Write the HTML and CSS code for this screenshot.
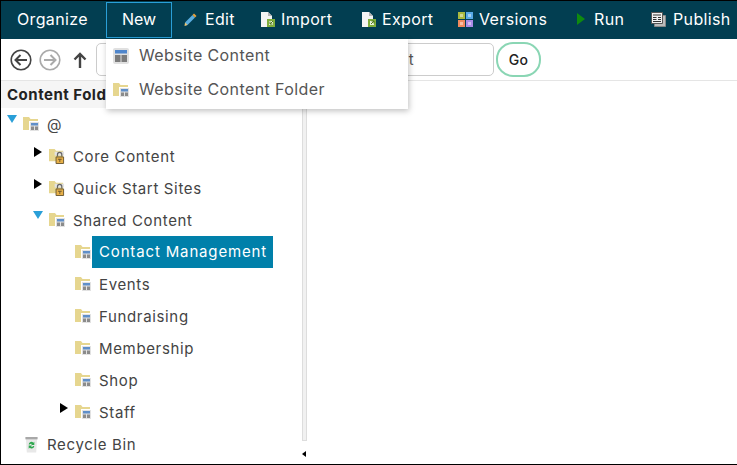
FILE: index.html
```html
<!DOCTYPE html>
<html lang="en">

  <head>
    <meta charset="UTF-8">
    <title>Content Manager</title>
    <link rel="stylesheet" href="styles.css">
  </head>

  <body>
    <svg class="defs" width="0" height="0">
      <symbol id="folder" viewBox="0 0 16 16">
        <path d="M0 1h6l1.500 2H15v11H0z" fill="#e6d68f"/>
        <path d="M6 5h10v10H6z" fill="#fff"/>
        <path d="M7 6h9v9H7z" fill="#e2e2e2"/>
        <path d="M8 7h7v2.500H8z" fill="#5f8fc9"/>
        <path d="M8 10.500h3V14H8zM12 10.500h3V14h-3z" fill="#8b8b8b"/>
      </symbol>
      <symbol id="locked" viewBox="0 0 17 17">
        <path d="M0 1h6l1.500 2H15v11H0z" fill="#e6d68f"/>
        <path d="M6 4h10v4H6z" fill="#e2e2e2"/>
        <path d="M9 9V7a2.300 2.300 0 0 1 4.600 0v2" fill="none" stroke="#666" stroke-width="1.300"/>
        <path d="M7.500 9.500h8v7h-8z" fill="#e7b048" stroke="#6b5730"/>
        <path d="M9.500 11.500h4v1h-1.500v2.500h-1v-2.500H9.500z" fill="#6b5730"/>
      </symbol>
    </svg>

    <div class="frame">
      <nav class="menubar">
        <a class="menu-item organize">Organize</a>
        <a class="menu-item active">New</a>
        <a class="menu-item edit">
          <svg class="icon" width="13" height="13" viewBox="0 0 13 13">
            <path d="M1 9.500 8.500 2l2.500 2.500L3.500 12 1 12.500z" fill="#5aaee0"/>
            <path d="M8.500 2 10 .5 12.500 3 11 4.500z" fill="#e9a23b"/>
            <path d="M1 9.500 3.500 12 .5 13z" fill="#f2c46a"/>
          </svg>
          Edit
        </a>
        <a class="menu-item import">
          <svg class="icon" width="14" height="15" viewBox="0 0 14 15">
            <path d="M0 0h7l4 4v11H0z" fill="#f4f4f4"/>
            <path d="M7 0v4h4z" fill="#b5b5b5"/>
            <path d="M6 7h8v8H6z" fill="#7fae3c"/>
            <path d="M8 9h4v4H8z" fill="#e8f2d8"/>
            <path d="M12 9 9 12M9 9.500V12h2.500" fill="none" stroke="#4f7a1c"/>
          </svg>
          Import
        </a>
        <a class="menu-item export">
          <svg class="icon" width="14" height="15" viewBox="0 0 14 15">
            <path d="M0 0h7l4 4v11H0z" fill="#f4f4f4"/>
            <path d="M7 0v4h4z" fill="#b5b5b5"/>
            <path d="M6 7h8v8H6z" fill="#7fae3c"/>
            <path d="M8 9h4v4H8z" fill="#e8f2d8"/>
            <path d="M9 12l3-3M9.500 9H12v2.500" fill="none" stroke="#4f7a1c"/>
          </svg>
          Export
        </a>
        <a class="menu-item versions">
          <svg class="icon" width="15" height="15" viewBox="0 0 15 15">
            <path d="M0 0h7v7H0z" fill="#a9b93f"/>
            <path d="M8 0h7v7H8z" fill="#58a9e6"/>
            <path d="M0 8h7v7H0z" fill="#f08a5d"/>
            <path d="M8 8h7v7H8z" fill="#a98be8"/>
            <path d="M2 2h3v3H2zM10 2h3v3h-3zM2 10h3v3H2zM10 10h3v3h-3z" fill="#fff" fill-opacity=".45"/>
          </svg>
          Versions
        </a>
        <a class="menu-item run">
          <svg class="icon" width="8" height="12" viewBox="0 0 8 12"><path d="M0 0l8 6-8 6z" fill="#0f8a0f"/></svg>
          Run
        </a>
        <a class="menu-item publish">
          <svg class="icon" width="15" height="15" viewBox="0 0 15 15">
            <path d="M3.500 3.500h11v11h-11z" fill="#bbb" stroke="#888"/>
            <path d="M.5.500h11v11H.5z" fill="#f2f2f2" stroke="#555"/>
            <path d="M2 3h8M2 5.500h3.500M7 5.500h3M2 7.500h3.500M7 7.500h3M2 9.500h8" stroke="#333"/>
          </svg>
          Publish
        </a>
      </nav>

      <div class="toolbar">
        <svg class="nav-btn" width="22" height="22" viewBox="0 0 22 22">
          <circle cx="11" cy="11" r="9.800" fill="none" stroke="#444" stroke-width="1.600"/>
          <path d="M17 11H6M10.500 6 5.500 11l5 5" fill="none" stroke="#444" stroke-width="2"/>
        </svg>
        <svg class="nav-btn" width="22" height="22" viewBox="0 0 22 22">
          <circle cx="11" cy="11" r="9.800" fill="none" stroke="#aaa" stroke-width="1.600"/>
          <path d="M5 11h11M11.500 6l5 5-5 5" fill="none" stroke="#aaa" stroke-width="2"/>
        </svg>
        <svg class="nav-btn up" width="14" height="16" viewBox="0 0 14 16">
          <path d="M7 16V2M1.500 7.500 7 2l5.500 5.500" fill="none" stroke="#444" stroke-width="2.400"/>
        </svg>
        <input class="path-input" type="text" value="@/Shared Content/Contact Management">
        <button class="go-btn">Go</button>
      </div>

      <div class="main">
        <aside class="sidebar">
          <div class="sidebar-title">Content Folders</div>
          <ul class="tree">
            <li class="row level-0">
              <span class="toggle open"></span>
              <svg class="folder"><use href="#folder"/></svg>
              <span class="label">@</span>
            </li>
            <li class="row level-1">
              <span class="toggle closed"></span>
              <svg class="folder"><use href="#locked"/></svg>
              <span class="label">Core Content</span>
            </li>
            <li class="row level-1">
              <span class="toggle closed"></span>
              <svg class="folder"><use href="#locked"/></svg>
              <span class="label">Quick Start Sites</span>
            </li>
            <li class="row level-1">
              <span class="toggle open"></span>
              <svg class="folder"><use href="#folder"/></svg>
              <span class="label">Shared Content</span>
            </li>
            <li class="row level-2">
              <span class="toggle"></span>
              <svg class="folder"><use href="#folder"/></svg>
              <span class="label selected">Contact Management</span>
            </li>
            <li class="row level-2">
              <span class="toggle"></span>
              <svg class="folder"><use href="#folder"/></svg>
              <span class="label">Events</span>
            </li>
            <li class="row level-2">
              <span class="toggle"></span>
              <svg class="folder"><use href="#folder"/></svg>
              <span class="label">Fundraising</span>
            </li>
            <li class="row level-2">
              <span class="toggle"></span>
              <svg class="folder"><use href="#folder"/></svg>
              <span class="label">Membership</span>
            </li>
            <li class="row level-2">
              <span class="toggle"></span>
              <svg class="folder"><use href="#folder"/></svg>
              <span class="label">Shop</span>
            </li>
            <li class="row level-2">
              <span class="toggle closed"></span>
              <svg class="folder"><use href="#folder"/></svg>
              <span class="label">Staff</span>
            </li>
            <li class="row level-0">
              <span class="toggle"></span>
              <svg class="folder bin" viewBox="0 0 16 18">
                <path d="M2 2.500h12L13 17.500H3z" fill="#e8e8e8"/>
                <path d="M1.500 1h13v2.500h-13z" fill="#a8a8a8"/>
                <path d="M5 9a3 3 0 0 1 5-2l1-1v3.500H7.500l1-1A2 2 0 0 0 6 9zM11 10.500a3 3 0 0 1-5 2l-1 1V10h3.500l-1 1A2 2 0 0 0 10 10.500z" fill="#2fa84f"/>
              </svg>
              <span class="label">Recycle Bin</span>
            </li>
          </ul>
        </aside>
        <div class="splitter"><span class="splitter-arrow"></span></div>
        <section class="content"></section>
      </div>

      <div class="dropdown">
        <div class="dropdown-item">
          <svg width="16" height="16" viewBox="0 0 16 16">
            <rect width="16" height="16" rx="2" fill="#e0e0e0"/>
            <path d="M2 2h12v3.500H2z" fill="#4f86cc"/>
            <path d="M2 7h5.500v7H2zM8.500 7H14v7H8.500z" fill="#7b7b7b"/>
          </svg>
          Website Content
        </div>
        <div class="dropdown-item">
          <svg width="16" height="16"><use href="#folder"/></svg>
          Website Content Folder
        </div>
      </div>
    </div>
  </body>

</html>
```

FILE: styles.css
```css
* {
  box-sizing: border-box;
}

body {
  margin: 0;
  font-family: Inter, "Open Sans", sans-serif;
  background-color: white;
}

.defs {
  position: absolute;
}

.frame {
  position: relative;
  display: flex;
  flex-direction: column;
  width: 737px;
  height: 465px;
  border: 1px solid black;
  border-right: none;
  overflow: hidden;
}

.menubar {
  display: flex;
  align-items: center;
  height: 38px;
  background-color: #023e51;
  padding-left: 1px;
}

.menu-item {
  display: flex;
  align-items: center;
  flex-shrink: 0;
  gap: 6px;
  height: 36px;
  color: white;
  font-size: 16px;
  letter-spacing: 0.35px;
  white-space: nowrap;
  padding-left: 12px;
  padding-bottom: 2px;
}

.organize {
  width: 104px;
  padding-left: 15px;
}

.active {
  width: 66px;
  justify-content: center;
  border: 1px solid #2a9fd8;
  padding: 0 0 2px;
  letter-spacing: 0;
}

.edit {
  width: 77px;
  gap: 8px;
}

.import {
  width: 101px;
}

.export {
  width: 96px;
}

.versions {
  width: 119px;
}

.run {
  width: 74px;
  gap: 9px;
}

.publish {
  gap: 7px;
}

.toolbar {
  display: flex;
  align-items: center;
  height: 42px;
  border-bottom: 1px solid #e5e5e5;
  padding: 0 0 0 9px;
}

.nav-btn {
  margin-right: 7px;
  flex-shrink: 0;
}

.nav-btn.up {
  margin-left: 5px;
  margin-right: 9px;
}

.path-input {
  width: 398px;
  height: 33px;
  border: 1px solid #ccc;
  border-radius: 5px;
  font: 15px Inter, sans-serif;
  letter-spacing: 0.52px;
  color: #555;
  padding: 0 6px 0 11px;
}

.go-btn {
  width: 45px;
  height: 35px;
  margin-left: 2px;
  background-color: white;
  border: 2px solid #8ad6b4;
  border-radius: 17px;
  color: #222;
  font: 500 14px Inter, sans-serif;
  letter-spacing: 0.4px;
}

.main {
  flex: 1;
  display: flex;
  min-height: 0;
}

.sidebar {
  width: 301px;
  flex-shrink: 0;
}

.sidebar-title {
  height: 27px;
  background-color: #f5f5f5;
  color: #222;
  font-size: 15px;
  font-weight: 700;
  letter-spacing: 0.5px;
  line-height: 27px;
  white-space: nowrap;
  overflow: hidden;
  padding-left: 6px;
}

.tree {
  list-style: none;
  margin: 0;
  padding: 0;
}

.row {
  display: flex;
  align-items: center;
  height: 32px;
  color: #444;
  font-size: 15px;
  letter-spacing: 0.65px;
}

.level-0 {
  padding-left: 6px;
}

.level-1 {
  padding-left: 32px;
}

.level-2 {
  padding-left: 58px;
}

.toggle {
  position: relative;
  width: 16px;
  height: 32px;
  flex-shrink: 0;
}

.toggle.closed:before {
  content: "";
  position: absolute;
  left: 1px;
  top: 7px;
  border-left: 8px solid black;
  border-top: 5px solid transparent;
  border-bottom: 5px solid transparent;
}

.toggle.open:before {
  content: "";
  position: absolute;
  left: 0;
  top: 7px;
  border-top: 8px solid #2a9fd8;
  border-left: 5px solid transparent;
  border-right: 5px solid transparent;
}

.folder {
  width: 16px;
  height: 16px;
  flex-shrink: 0;
}

.bin {
  width: 15px;
  height: 17px;
  margin-left: 1px;
}

.label {
  margin-left: 8px;
  white-space: nowrap;
}

.selected {
  margin-left: 1px;
  width: 181px;
  height: 32px;
  line-height: 32px;
  padding-left: 7px;
  background-color: #0080aa;
  color: white;
  letter-spacing: 0.85px;
}

.splitter {
  position: relative;
  width: 5px;
  flex-shrink: 0;
  background-color: #f1f1f1;
  border-left: 1px solid #ddd;
  border-right: 1px solid #ddd;
}

.splitter-arrow {
  position: absolute;
  left: -1px;
  bottom: 0;
  width: 5px;
  height: 24px;
  border-top: 1px solid #ddd;
  background-color: white;
}

.splitter-arrow:before {
  content: "";
  position: absolute;
  left: 0;
  bottom: 7px;
  border-right: 4px solid black;
  border-top: 3px solid transparent;
  border-bottom: 3px solid transparent;
}

.content {
  flex: 1;
}

.dropdown {
  position: absolute;
  left: 105px;
  top: 38px;
  width: 302px;
  height: 70px;
  display: flex;
  flex-direction: column;
  gap: 2px;
  background-color: white;
  box-shadow: 1px 2px 6px rgba(0, 0, 0, 0.25);
}

.dropdown-item {
  display: flex;
  align-items: center;
  gap: 10px;
  height: 32px;
  padding-left: 7px;
  color: #555;
  font-size: 16px;
  letter-spacing: 0.4px;
}

.dropdown-item svg {
  margin-top: 2px;
}
```
